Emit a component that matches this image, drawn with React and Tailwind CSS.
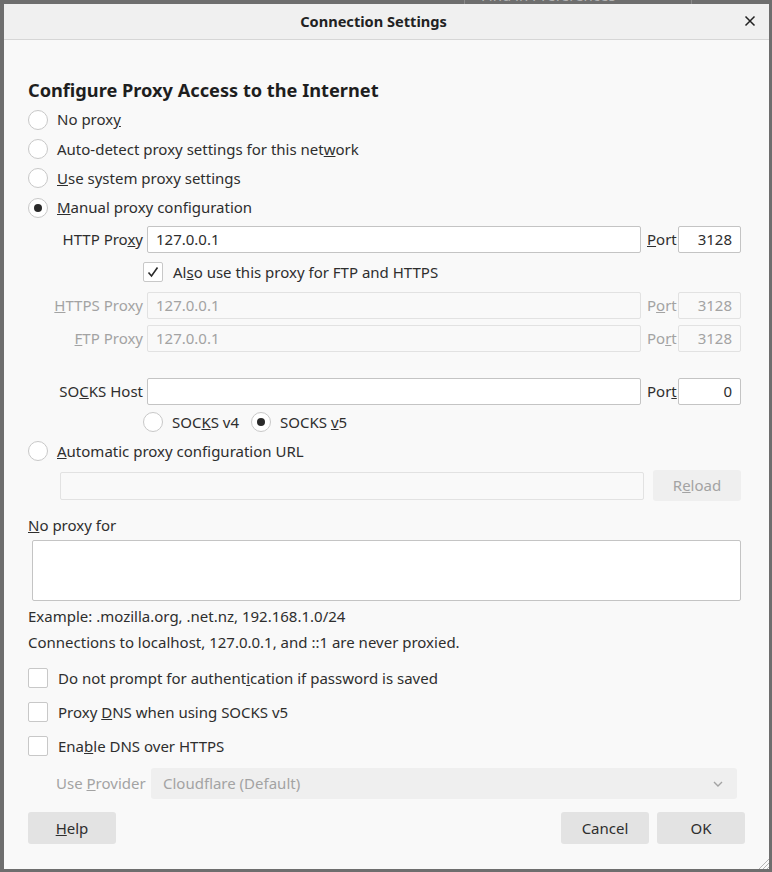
import React from "react";

const font = { fontFamily: '"Noto Sans", "DejaVu Sans", sans-serif' };

const Radio = ({ checked }) => (
  <span className="w-[20px] h-[20px] shrink-0 rounded-full border border-[#c8c8c8] bg-white flex items-center justify-center">
    {checked && <span className="w-[8px] h-[8px] rounded-full bg-[#2a2a2a]" />}
  </span>
);

const Check = ({ checked }) => (
  <span className="w-[20px] h-[20px] shrink-0 rounded-[2px] border border-[#c8c8c8] bg-white flex items-center justify-center">
    {checked && (
      <svg width="14" height="14" viewBox="0 0 14 14">
        <path d="M2.5 7.5 L5.5 11 L11.5 2.5" fill="none" stroke="#2a2a2a" strokeWidth="1.6" />
      </svg>
    )}
  </span>
);

const TextBox = ({ value, disabled, className, right }) => (
  <div
    className={`h-[27px] rounded-[2px] border flex items-center px-[8px] ${
      disabled ? "border-[#e2e2e2] bg-[#f9f9f9] text-[#a3a3a3]" : "border-[#c4c4c4] bg-white text-[#2e2e2e]"
    } ${right ? "justify-end" : ""} ${className}`}
  >
    {value}
  </div>
);

const ProxyRow = ({ label, value, port, portLabel, disabled, className }) => (
  <div className={`flex items-center ${className}`}>
    <span className={`w-[115px] text-right whitespace-nowrap ${disabled ? "text-[#a3a3a3]" : ""}`}>{label}</span>
    <TextBox value={value} disabled={disabled} className="ml-[4px] w-[494px]" />
    <span className={`ml-[6px] w-[31px] whitespace-nowrap ${disabled ? "text-[#a3a3a3]" : ""}`}>{portLabel}</span>
    <TextBox value={port} disabled={disabled} right className="w-[63px]" />
  </div>
);

export default function App() {
  return (
    <div className="relative w-[772px] h-[872px] bg-[#6e6e6e] pl-[4px] pt-[4px] pr-[3px] pb-[3px] overflow-hidden" style={font}>
      <div className="absolute left-[464px] top-[-13px] w-[228px] h-[17px] border-x border-[#8a8a8a] text-[15px] text-[#b0b0b0] pl-[16px] leading-[17px]">
        Find in Preferences
      </div>
      <div className="relative w-[765px] h-[865px] bg-[#f9f9f9] flex flex-col text-[15px] text-[#2e2e2e]">
        {/* title bar */}
        <div className="h-[36px] shrink-0 bg-[#f0f0f0] border-b border-[#d6d6d6] flex items-center justify-center pr-[26px] relative">
          <span className="font-bold text-[14.6px] text-[#222]">Connection Settings</span>
          <svg className="absolute right-[13px] top-[11px]" width="12" height="12" viewBox="0 0 12 12">
            <path d="M1.5 1.5 L10.5 10.5 M10.5 1.5 L1.5 10.5" stroke="#222" strokeWidth="1.5" />
          </svg>
        </div>

        <div className="pl-[24px] flex flex-col">
          <h1 className="mt-[39px] h-[22px] leading-[22px] font-bold text-[18.2px] text-[#1e1e1e] whitespace-nowrap">
            Configure Proxy Access to the Internet
          </h1>
          <div className="mt-[4px] flex flex-col">
            <label className="h-[29.3px] flex items-center gap-[9px]">
              <Radio /> <span>No prox<u>y</u></span>
            </label>
            <label className="h-[29.3px] flex items-center gap-[9px]">
              <Radio /> <span>Auto-detect proxy settings for this net<u>w</u>ork</span>
            </label>
            <label className="h-[29.3px] flex items-center gap-[9px]">
              <Radio /> <span><u>U</u>se system proxy settings</span>
            </label>
            <label className="h-[29.3px] flex items-center gap-[9px]">
              <Radio checked /> <span><u>M</u>anual proxy configuration</span>
            </label>
          </div>

          <ProxyRow
            className="mt-[4px]"
            label={<>HTTP Pro<u>x</u>y</>}
            value="127.0.0.1"
            portLabel={<><u>P</u>ort</>}
            port="3128"
          />
          <label className="mt-[6px] h-[26px] flex items-center ml-[115px] gap-[10px]">
            <Check checked /> <span>Al<u>s</u>o use this proxy for FTP and HTTPS</span>
          </label>
          <ProxyRow
            className="mt-[7px]"
            disabled
            label={<><u>H</u>TTPS Proxy</>}
            value="127.0.0.1"
            portLabel={<>P<u>o</u>rt</>}
            port="3128"
          />
          <ProxyRow
            className="mt-[6px]"
            disabled
            label={<><u>F</u>TP Proxy</>}
            value="127.0.0.1"
            portLabel={<>Po<u>r</u>t</>}
            port="3128"
          />
          <ProxyRow
            className="mt-[26px]"
            label={<>SO<u>C</u>KS Host</>}
            value=""
            portLabel={<>Por<u>t</u></>}
            port="0"
          />
          <div className="mt-[5px] h-[24px] flex items-center ml-[115px]">
            <Radio />
            <span className="ml-[9px]">SOC<u>K</u>S v4</span>
            <span className="ml-[12px]"><Radio checked /></span>
            <span className="ml-[9px]">SOCKS <u>v</u>5</span>
          </div>
          <label className="mt-[5px] h-[24px] flex items-center gap-[9px]">
            <Radio /> <span><u>A</u>utomatic proxy configuration URL</span>
          </label>
          <div className="mt-[7px] flex items-center">
            <div className="ml-[32px] w-[584px] h-[28px] rounded-[2px] border border-[#e2e2e2] bg-[#f9f9f9]" />
            <div className="ml-[9px] w-[88px] h-[31px] rounded-[3px] bg-[#efefef] text-[#a3a3a3] flex items-center justify-center">
              R<u>e</u>load
            </div>
          </div>

          <div className="mt-[14px] h-[20px] leading-[20px]">
            <u>N</u>o proxy for
          </div>
          <div className="mt-[5px] ml-[4px] w-[709px] h-[61px] rounded-[2px] border border-[#c4c4c4] bg-white" />
          <div className="mt-[5px] h-[20px] leading-[20px]">Example: .mozilla.org, .net.nz, 192.168.1.0/24</div>
          <div className="mt-[6px] h-[20px] leading-[20px]">Connections to localhost, 127.0.0.1, and ::1 are never proxied.</div>

          <div className="mt-[14px] flex flex-col gap-[10px]">
            <label className="h-[24px] flex items-center gap-[10px]">
              <Check /> <span>Do not prompt for authent<u>i</u>cation if password is saved</span>
            </label>
            <label className="h-[24px] flex items-center gap-[10px]">
              <Check /> <span>Proxy <u>D</u>NS when using SOCKS v5</span>
            </label>
            <label className="h-[24px] flex items-center gap-[10px]">
              <Check /> <span>Ena<u>b</u>le DNS over HTTPS</span>
            </label>
          </div>

          <div className="mt-[10px] flex items-center">
            <span className="ml-[28px] w-[95px] text-[#a3a3a3] whitespace-nowrap">Use <u>P</u>rovider</span>
            <div className="w-[586px] h-[31px] rounded-[3px] bg-[#efefef] text-[#a3a3a3] flex items-center justify-between pl-[12px] pr-[14px]">
              <span>Cloudflare (Default)</span>
              <svg width="10" height="6" viewBox="0 0 10 6">
                <path d="M1 1 L5 5 L9 1" fill="none" stroke="#a3a3a3" strokeWidth="1.4" />
              </svg>
            </div>
          </div>

          <div className="mt-[13px] flex items-center">
            <div className="w-[88px] h-[32px] rounded-[3px] bg-[#e3e3e3] flex items-center justify-center">
              <u>H</u>elp
            </div>
            <div className="ml-auto mr-[24px] flex gap-[8px]">
              <div className="w-[88px] h-[32px] rounded-[3px] bg-[#e3e3e3] flex items-center justify-center">Cancel</div>
              <div className="w-[88px] h-[32px] rounded-[3px] bg-[#e3e3e3] flex items-center justify-center">OK</div>
            </div>
          </div>
        </div>

        <svg className="absolute right-0 bottom-0" width="12" height="12" viewBox="0 0 12 12">
          <path d="M12 2 L2 12 M12 6 L6 12 M12 10 L10 12" stroke="#b5b5b5" strokeWidth="1" />
        </svg>
      </div>
    </div>
  );
}
